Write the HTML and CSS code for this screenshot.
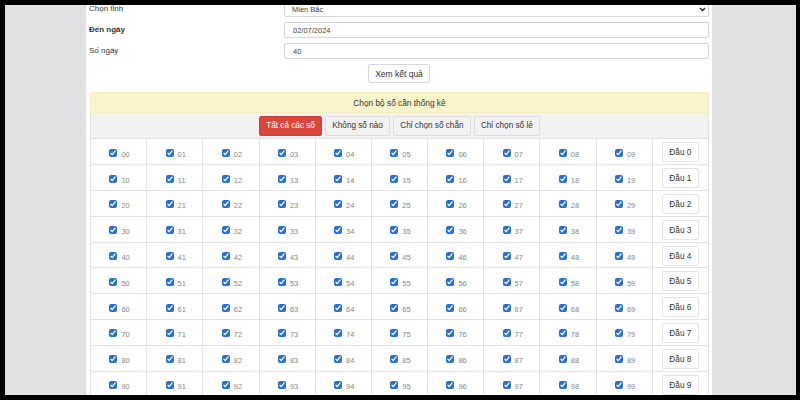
FILE: index.html
```html
<!DOCTYPE html>
<html lang="vi">
<head>
<meta charset="utf-8">
<title>Thống kê</title>
<link rel="stylesheet" href="styles.css">
</head>
<body>
<div class="frame">
  <div class="side side-left"></div>
  <div class="content">
    <form class="filter">
      <label class="lbl">Chọn tỉnh</label>
      <div class="select-wrap">
        <select class="field"><option>Miền Bắc</option></select>
        <svg class="chev" width="7" height="5" viewBox="0 0 7 5"><path d="M1 1 L3.5 3.5 L6 1" fill="none" stroke="#222" stroke-width="1.4"/></svg>
      </div>
      <label class="lbl bold">Đến ngày</label>
      <input class="field" type="text" value="02/07/2024">
      <label class="lbl">Số ngày</label>
      <input class="field" type="text" value="40">
    </form>
    <div class="submit-row"><button class="btn-submit" type="button">Xem kết quả</button></div>
    <table class="grid head">
      <tr><td colspan="11" class="caption">Chọn bộ số cần thống kê</td></tr>
      <tr><td colspan="11" class="toolbar">
        <div class="tools">
          <button class="tbtn danger" type="button">Tất cả các số</button>
          <button class="tbtn" type="button">Không số nào</button>
          <button class="tbtn" type="button">Chỉ chọn số chẵn</button>
          <button class="tbtn" type="button">Chỉ chọn số lẻ</button>
        </div>
      </td></tr>
    </table>
    <table class="grid nums" id="nums"></table>
  </div>
  <div class="side side-right"></div>
</div>
<script src="app.js"></script>
</body>
</html>
```

FILE: app.js
```js
(function () {
  var t = document.getElementById('nums');
  var html = '';
  for (var r = 0; r < 10; r++) {
    html += '<tr>';
    for (var c = 0; c < 10; c++) {
      var n = '' + r + c;
      html += '<td><label class="num"><input type="checkbox" checked><span>' + n + '</span></label></td>';
    }
    html += '<td><button class="dau" type="button">Đầu ' + r + '</button></td>';
    html += '</tr>';
  }
  t.innerHTML = html;
})();
```

FILE: styles.css
```css
html, body {
  margin: 0;
  padding: 0;
  background: #000;
}
body {
  width: 800px;
  height: 400px;
  overflow: hidden;
  font-family: "Liberation Sans", Arial, sans-serif;
  color: #333;
}
.frame {
  box-sizing: border-box;
  width: 800px;
  height: 400px;
  padding: 5px 4px 5px 5px;
  display: flex;
}
.side {
  background: #e1e1e3;
  height: 390px;
}
.side-left { width: 81px; }
.side-right { width: 84px; }
.content {
  width: 626px;
  height: 390px;
  background: #fff;
  overflow: hidden;
  box-sizing: border-box;
  padding: 0 3px 0 4px;
}
.filter {
  margin: -4px 0 0 0;
  display: grid;
  grid-template-columns: 194px 1fr;
  row-gap: 5px;
}
.lbl {
  font-size: 8px;
  line-height: 11px;
  padding-top: 2px;
  margin-left: -1px;
  color: #333;
}
.bold { font-weight: bold; }
.select-wrap { position: relative; height: 16px; }
.field {
  display: block;
  box-sizing: border-box;
  width: 100%;
  height: 16px;
  border: 1px solid #d6d6d6;
  border-radius: 2px;
  background: #fff;
  font-family: "Liberation Sans", Arial, sans-serif;
  font-size: 7.5px;
  color: #444;
  padding: 0 8px;
  margin: 0;
  outline: none;
}
select.field {
  appearance: none;
  -webkit-appearance: none;
  padding-left: 7px;
}
.chev {
  position: absolute;
  right: 3px;
  top: 6px;
}
.submit-row {
  display: flex;
  justify-content: center;
  margin-top: 5px;
}
.btn-submit {
  height: 19px;
  padding: 0 6px;
  border: 1px solid #d9d9d9;
  border-radius: 2px;
  background: #fff;
  font-family: "Liberation Sans", Arial, sans-serif;
  font-size: 8.5px;
  color: #333;
  margin-left: -1px;
}
.grid {
  width: 619px;
  border-collapse: collapse;
  table-layout: fixed;
}
.grid td {
  border: 1px solid #e2e2e2;
  padding: 0;
}
.head { margin-top: 9px; }
.caption {
  background: #fbf3c9;
  height: 19px;
  text-align: center;
  font-size: 8.3px;
  color: #333;
  border-color: #f3ecc4 !important;
}
.toolbar {
  background: #f2f2f2;
  height: 25px;
}
.tools {
  display: flex;
  justify-content: center;
  gap: 3px;
}
.tbtn {
  height: 20px;
  padding: 0 6.2px;
  border: 1px solid #dcdcdc;
  border-radius: 2px;
  background: #f2f2f2;
  font-family: "Liberation Sans", Arial, sans-serif;
  font-size: 8.2px;
  color: #333;
}
.tbtn.danger {
  background: #d9473c;
  border-color: #cf3f35;
  color: #fff;
}
.nums tr { height: 25.8px; }
.nums td {
  text-align: center;
  vertical-align: middle;
}
.nums tr:first-child td { border-top: none; }
.num {
  display: inline-flex;
  align-items: center;
  gap: 4px;
  font-size: 7.5px;
  color: #888;
  margin-left: 2px;
}
.num input {
  width: 8px;
  height: 8px;
  margin: 0 0 2px 0;
  accent-color: #2770d6;
}
.num span { padding-top: 1px; }
.dau {
  height: 20px;
  width: 37px;
  padding: 0;
  border: 1px solid #e3e3e3;
  border-radius: 2px;
  background: #fff;
  font-family: "Liberation Sans", Arial, sans-serif;
  font-size: 8.3px;
  color: #333;
}
```
